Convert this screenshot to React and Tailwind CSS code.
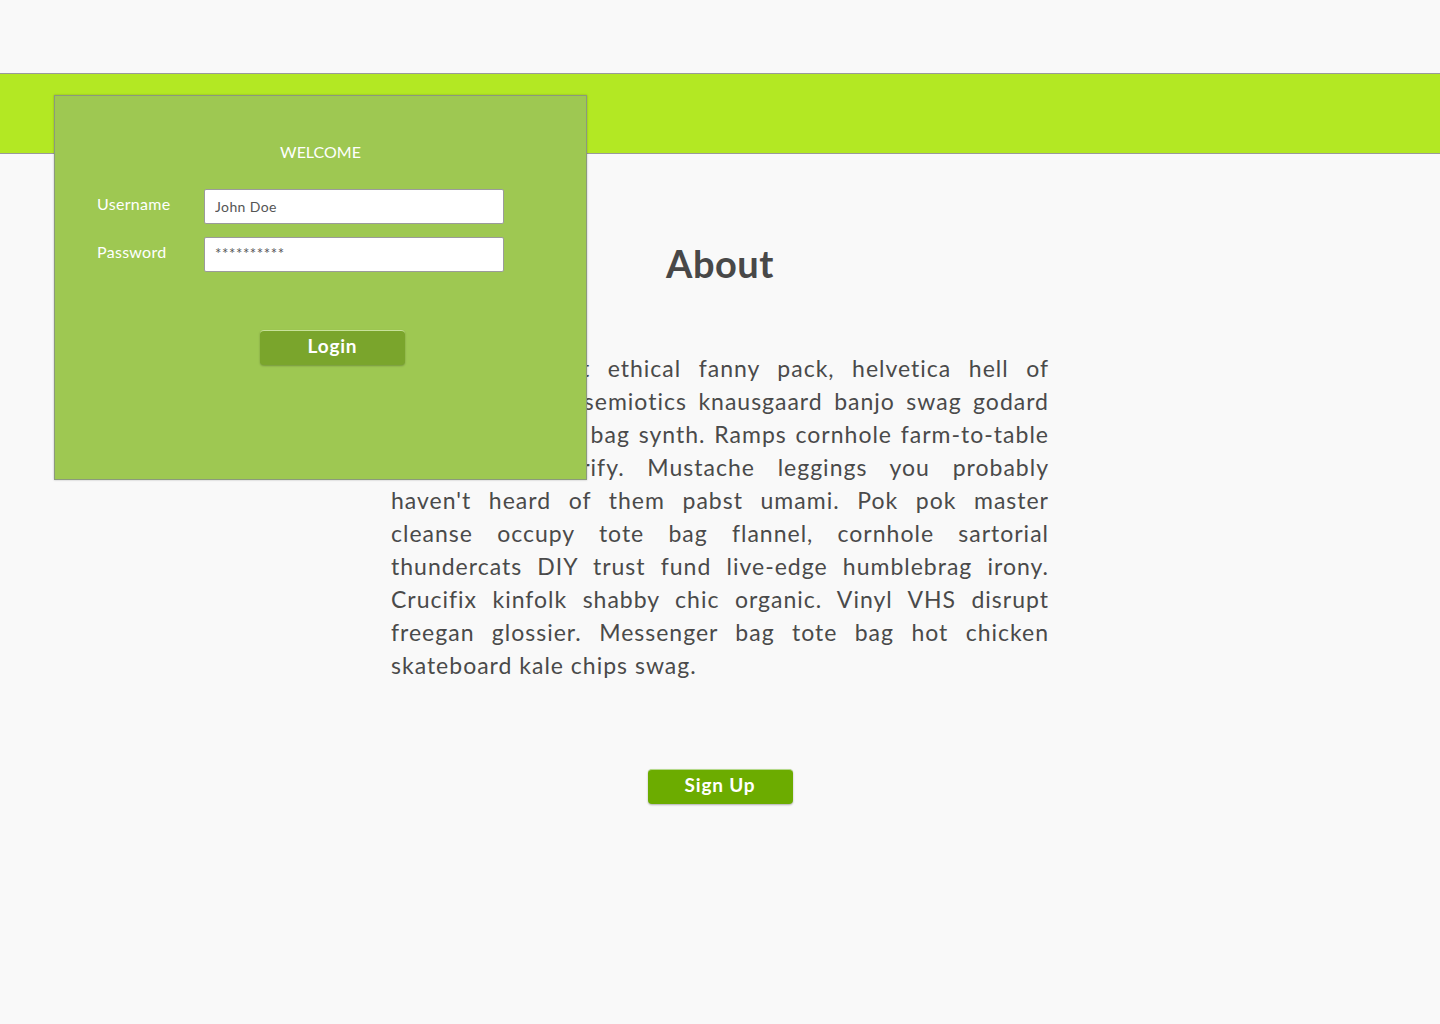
import React from 'react';

const lines = [
  'Lorem ipsum art ethical fanny pack, helvetica hell of',
  'pinterest listicle semiotics knausgaard banjo swag godard',
  'kitsch messenger bag synth. Ramps cornhole farm-to-table',
  'meditation gentrify. Mustache leggings you probably',
  "haven't heard of them pabst umami. Pok pok master",
  'cleanse occupy tote bag flannel, cornhole sartorial',
  'thundercats DIY trust fund live-edge humblebrag irony.',
  'Crucifix kinfolk shabby chic organic. Vinyl VHS disrupt',
  'freegan glossier. Messenger bag tote bag hot chicken',
  'skateboard kale chips swag.',
];

export default function App() {
  return (
    <div className="relative min-h-screen w-full bg-[#f9f9f9] font-['Lato','Open_Sans',sans-serif] text-[#4a4a4a]">
      {/* top spacer + green bar */}
      <div className="h-[73px]" />
      <div className="h-[81px] bg-[#b3e823] border-y border-[#9a9a9a]" />

      {/* main content */}
      <main className="flex flex-col items-center">
        <h1 className="mt-[90px] text-[38px] leading-none font-bold tracking-[0.5px] text-[#484848]">About</h1>
        <p className="mt-[70px] w-[658px] text-[23px] leading-[33px] tracking-[1px] text-[#4a4a4a]">
          {lines.map((l, i) => (
            <span
              key={i}
              className={`block text-justify whitespace-nowrap ${i < lines.length - 1 ? '[text-align-last:justify]' : ''}`}
            >
              {l}
            </span>
          ))}
        </p>
        <button className="mt-[87px] w-[145px] h-[35px] pb-[4px] rounded-[4px] bg-[#6cac00] border-t border-[#b5d98a] text-white text-[19px] font-bold tracking-[0.8px] shadow-[0_1px_2px_rgba(0,0,0,0.3)]">
          Sign Up
        </button>
      </main>

      {/* login panel overlay */}
      <div className="absolute left-[54px] top-[95px] w-[533px] h-[385px] bg-[#9ec852] border border-[#8b9a7c] shadow-[0_0_2px_rgba(0,0,0,0.25)] flex flex-col">
        <div className="mt-[46px] text-center text-white text-[16px] leading-5">WELCOME</div>
        <div className="mt-[27px] flex flex-col gap-[13px] pl-[42px]">
          <div className="flex items-center">
            <label className="w-[107px] text-white text-[16px] tracking-[0.3px] -mt-[5px]">Username</label>
            <input
              readOnly
              value="John Doe"
              className="w-[300px] h-[35px] bg-white border border-[#9b9b9b] rounded-[2px] pl-[10px] text-[14px] tracking-[0.4px] text-[#555] outline-none"
            />
          </div>
          <div className="flex items-center">
            <label className="w-[107px] text-white text-[16px] tracking-[0.3px] -mt-[5px]">Password</label>
            <input
              readOnly
              value="**********"
              className="w-[300px] h-[35px] bg-white border border-[#9b9b9b] rounded-[2px] pl-[10px] pb-[3px] text-[15px] tracking-[0.6px] text-[#555] outline-none"
            />
          </div>
        </div>
        <button className="mt-[58px] ml-[205px] w-[145px] h-[35px] pb-[4px] rounded-[4px] bg-[#7aa52c] border-t border-[#c8e29a] text-white text-[19px] font-bold tracking-[0.8px] shadow-[0_1px_2px_rgba(0,0,0,0.25)]">
          Login
        </button>
      </div>
    </div>
  );
}
